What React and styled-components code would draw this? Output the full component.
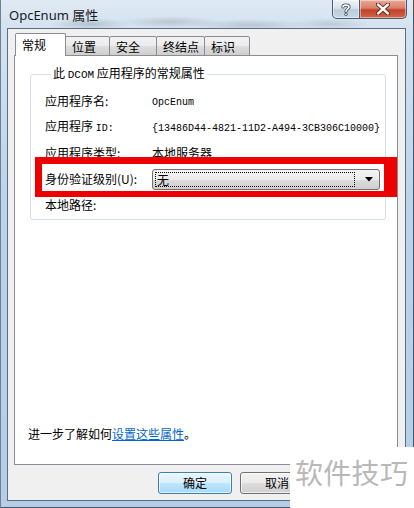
import React from "react";
import styled, { createGlobalStyle } from "styled-components";

const cjk = `"Noto Sans CJK SC", "Noto Sans", sans-serif`;

const Global = createGlobalStyle`
  html, body { margin: 0; padding: 0; width: 414px; height: 508px; overflow: hidden; background: #fff; }
  #root { width: 414px; height: 508px; }
  * { box-sizing: border-box; }
`;

const Window = styled.div`
  position: relative;
  width: 414px;
  height: 508px;
  display: flex;
  flex-direction: column;
  font-family: ${cjk};
  font-size: 12px;
  color: #000;
  background:
    radial-gradient(ellipse 40px 6px at 90px 24px, rgba(120,130,140,0.35), transparent),
    radial-gradient(ellipse 50px 6px at 170px 22px, rgba(120,130,140,0.3), transparent),
    radial-gradient(ellipse 60px 6px at 250px 25px, rgba(120,130,140,0.3), transparent),
    radial-gradient(ellipse 40px 6px at 330px 24px, rgba(120,130,140,0.25), transparent),
    linear-gradient(180deg, #dfe9f3 0%, #d3e2f0 6%, #bcd3ea 40%, #b5cde6 100%);
  box-shadow: inset 1px 0 0 #6d8097, inset -1px 0 0 #44566b, inset 0 -1px 0 #44566b;
`;

const TitleBar = styled.div`
  height: 28px;
  flex: none;
  display: flex;
  align-items: flex-start;
`;

const Title = styled.div`
  padding: 7px 0 0 9px;
  font-family: "Noto Sans", ${cjk};
  font-size: 13px;
  line-height: 16px;
  color: #1a1a1a;
`;

const Captions = styled.div`
  margin-left: auto;
  margin-right: 7px;
  display: flex;
`;

const CapButton = styled.div`
  width: ${(p) => p.$w}px;
  height: 19px;
  border: 1px solid #4b5b6e;
  border-top: none;
  display: flex;
  align-items: center;
  justify-content: center;
  border-radius: ${(p) => (p.$close ? "0 0 5px 0" : "0 0 0 5px")};
  border-left: ${(p) => (p.$close ? "none" : "1px solid #4b5b6e")};
  background: ${(p) =>
    p.$close
      ? "linear-gradient(180deg, #e9a897 0%, #d8806a 45%, #c3412a 55%, #d2664c 100%)"
      : "linear-gradient(180deg, #eef3f8 0%, #d8e2ec 45%, #bccbdb 55%, #cad8e6 100%)"};
  box-shadow: inset 0 0 0 1px rgba(255,255,255,0.45);
`;

const Client = styled.div`
  flex: 1;
  margin: 0 8px 7px 7px;
  border: 1px solid #5b6d82;
  background: #f0f0f0;
  display: flex;
  flex-direction: column;
  padding: 4px 7px 0 6px;
`;

const TabStrip = styled.div`
  display: flex;
  align-items: flex-end;
  height: 23px;
  padding-left: 1px;
  position: relative;
  z-index: 1;
`;

const Tab = styled.div`
  width: ${(p) => p.$w}px;
  height: ${(p) => (p.$active ? 23 : 20)}px;
  border: 1px solid #898c95;
  border-bottom: ${(p) => (p.$active ? "none" : "1px solid #898c95")};
  margin-left: ${(p) => (p.$first ? 0 : -1)}px;
  border-radius: 2px 2px 0 0;
  background: ${(p) =>
    p.$active ? "#fff" : "linear-gradient(180deg, #f2f2f2 0%, #ebebeb 50%, #dddddd 51%, #cfcfcf 100%)"};
  display: flex;
  align-items: center;
  padding-left: 6px;
  padding-top: ${(p) => (p.$active ? 0 : 1)}px;
  line-height: 14px;
  position: relative;
  z-index: ${(p) => (p.$active ? 2 : 1)};
`;

const Panel = styled.div`
  height: 410px;
  margin-top: -1px;
  border: 1px solid #898c95;
  background: #fff;
  display: flex;
  flex-direction: column;
`;

const Group = styled.fieldset`
  margin: 10px 11px 0 15px;
  padding: 6px 0 1px 14px;
  border: 1px solid #d5dfe5;
  border-radius: 3px;
  min-width: 0;
`;

const Legend = styled.legend`
  margin-left: 6px;
  padding: 0 2px;
  line-height: 14px;
  font-size: 12px;
`;

const Mono = styled.span`
  font-family: "Liberation Mono", monospace;
  font-size: ${(p) => p.$size || 10}px;
`;

const Rows = styled.div`
  display: grid;
  grid-template-columns: 107px 1fr;
  grid-auto-rows: 26px;
  align-items: center;
`;

const Label = styled.div`
  line-height: 14px;
  white-space: nowrap;
`;

const Value = styled.div`
  line-height: 14px;
  white-space: nowrap;
`;

const Combo = styled.div`
  width: 228px;
  height: 21px;
  border: 1px solid #707070;
  border-radius: 3px;
  background: linear-gradient(180deg, #f3f3f3 0%, #ebebeb 50%, #dddddd 51%, #cfcfcf 100%);
  display: flex;
  align-items: center;
  padding: 0 6px 0 2px;
`;

const ComboText = styled.div`
  flex: 1;
  height: 15px;
  border: 1px dotted #000;
  line-height: 13px;
  padding-left: 1px;
  margin-right: 10px;
`;

const Spacer = styled.div`
  flex: 1;
`;

const Help = styled.div`
  margin: 0 0 23px 13px;
  line-height: 14px;
`;

const Link = styled.a`
  color: #0066cc;
  text-decoration: underline;
`;

const ButtonRow = styled.div`
  display: flex;
  justify-content: flex-end;
  gap: 8px;
  padding: 7px 84px 0 0;
`;

const Button = styled.div`
  width: 74px;
  height: 22px;
  border-radius: 3px;
  border: 1px solid ${(p) => (p.$default ? "#3c7fb1" : "#707070")};
  background: ${(p) =>
    p.$default
      ? "linear-gradient(180deg, #eaf6fd 0%, #d9f0fc 50%, #bee6fd 51%, #a7d9f5 100%)"
      : "linear-gradient(180deg, #f2f2f2 0%, #ebebeb 50%, #dddddd 51%, #cfcfcf 100%)"};
  box-shadow: inset 0 0 0 1px rgba(255,255,255,0.65);
  color: #000;
  display: flex;
  align-items: center;
  justify-content: center;
  line-height: 14px;
`;

const RedBox = styled.div`
  position: absolute;
  left: 35px;
  top: 157px;
  width: 362px;
  height: 40px;
  border-style: solid;
  border-color: #ee0000;
  border-width: 7px 13px 6px 7px;
  pointer-events: none;
`;

const Watermark = styled.div`
  position: absolute;
  left: 290px;
  top: 447px;
  right: 0;
  bottom: 0;
  background: #fff;
  color: #b8b8b8;
  font-size: 28px;
  line-height: 50px;
  padding-left: 5px;
  white-space: nowrap;
  letter-spacing: 0.3px;
`;

const HelpGlyph = () => (
  <svg width="10" height="13" viewBox="0 0 10 13">
    <path d="M2 4 C2 1.5 8 1.5 8 4 C8 6 5 6 5 8.5" fill="none" stroke="#3e4a58" strokeWidth="3.2" strokeLinecap="round" />
    <path d="M2 4 C2 1.5 8 1.5 8 4 C8 6 5 6 5 8.5" fill="none" stroke="#fff" strokeWidth="1.6" strokeLinecap="round" />
    <circle cx="5" cy="11.3" r="1.6" fill="#3e4a58" />
    <circle cx="5" cy="11.3" r="0.9" fill="#fff" />
  </svg>
);

const CloseGlyph = () => (
  <svg width="14" height="12" viewBox="0 0 14 12">
    <path d="M2 1.5 L12 10.5 M12 1.5 L2 10.5" stroke="#5a1a10" strokeWidth="4.2" strokeLinecap="round" />
    <path d="M2 1.5 L12 10.5 M12 1.5 L2 10.5" stroke="#fff" strokeWidth="2.4" strokeLinecap="round" />
  </svg>
);

const Arrow = () => (
  <svg width="8" height="5" viewBox="0 0 8 5">
    <path d="M0 0 H8 L4 4.5 Z" fill="#000" />
  </svg>
);

export default function App() {
  const tabs = [
    { t: "常规", w: 51, a: true },
    { t: "位置", w: 45 },
    { t: "安全", w: 48 },
    { t: "终结点", w: 49 },
    { t: "标识", w: 46 },
  ];
  return (
    <>
      <Global />
      <Window>
        <TitleBar>
          <Title>OpcEnum 属性</Title>
          <Captions>
            <CapButton $w={28}>
              <HelpGlyph />
            </CapButton>
            <CapButton $w={47} $close>
              <CloseGlyph />
            </CapButton>
          </Captions>
        </TitleBar>
        <Client>
          <TabStrip>
            {tabs.map((tb, i) => (
              <Tab key={tb.t} $w={tb.w} $active={tb.a} $first={i === 0}>
                {tb.t}
              </Tab>
            ))}
          </TabStrip>
          <Panel>
            <Group>
              <Legend>
                此 <Mono $size={11}>DCOM</Mono> 应用程序的常规属性
              </Legend>
              <Rows>
                <Label>应用程序名:</Label>
                <Value>
                  <Mono>OpcEnum</Mono>
                </Value>
                <Label>
                  应用程序 <Mono>ID:</Mono>
                </Label>
                <Value>
                  <Mono>{"{13486D44-4821-11D2-A494-3CB306C10000}"}</Mono>
                </Value>
                <Label>应用程序类型:</Label>
                <Value>本地服务器</Value>
                <Label>身份验证级别(U):</Label>
                <Value>
                  <Combo>
                    <ComboText>无</ComboText>
                    <Arrow />
                  </Combo>
                </Value>
                <Label>本地路径:</Label>
                <Value />
              </Rows>
            </Group>
            <Spacer />
            <Help>
              进一步了解如何<Link>设置这些属性</Link>。
            </Help>
          </Panel>
          <ButtonRow>
            <Button $default>确定</Button>
            <Button>取消</Button>
          </ButtonRow>
        </Client>
        <RedBox />
        <Watermark>软件技巧</Watermark>
      </Window>
    </>
  );
}
